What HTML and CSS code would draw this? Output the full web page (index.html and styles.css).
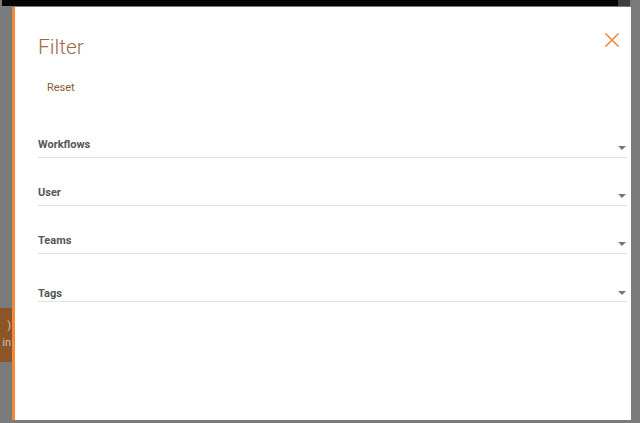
FILE: index.html
```html
<!DOCTYPE html>
<html>
<head>
<meta charset="UTF-8">
<title>Filter</title>
<link rel="stylesheet" href="styles.css">
</head>
<body>
<div class="topbar"><div class="topbar-end"></div></div>
<div class="side-btn"><span>)</span><span>in</span></div>

<div class="modal">
  <div class="modal-head">
    <h2 class="title">Filter</h2>
    <svg class="close" width="16" height="16" viewBox="0 0 16 16"><path d="M1.5 1.5 L14.5 14.5 M14.5 1.5 L1.5 14.5" stroke="#f0883c" stroke-width="1.6" fill="none"/></svg>
  </div>
  <a class="reset" href="#">Reset</a>

  <div class="fields">
    <div class="field"><span>Workflows</span><i class="caret"></i></div>
    <div class="field"><span>User</span><i class="caret"></i></div>
    <div class="field"><span>Teams</span><i class="caret"></i></div>
    <div class="field last"><span>Tags</span><i class="caret"></i></div>
  </div>
</div>
</body>
</html>
```

FILE: styles.css
```css
body { margin: 0; width: 640px; height: 423px; background: #7b7b7b; overflow: hidden; position: relative; font-family: Roboto, "Liberation Sans", sans-serif; }
.topbar { height: 6px; margin: 0 10px 0 2px; background: #050505; display: flex; justify-content: flex-end; }
.topbar-end { width: 12px; background: #3e3e3e; }
.side-btn { position: absolute; left: 0; top: 308px; width: 12px; height: 54px; background: #8c5528; color: #c9c2b8; font-size: 11px; line-height: 17px; padding-top: 9px; box-sizing: border-box; display: flex; flex-direction: column; align-items: flex-end; overflow: hidden; }
.side-btn span { margin-right: 1px; }

.modal { position: absolute; left: 12px; top: 7px; width: 619px; height: 413px; background: #fff; border-left: 3px solid #f5883a; box-sizing: border-box; padding: 0 4px 0 23px; }
.modal-head { display: flex; justify-content: space-between; align-items: flex-start; }
.title { margin: 28px 0 0; font-weight: 300; font-size: 21px; color: #9d6a48; }
.close { margin: 25px 7px 0 0; }
.reset { display: inline-block; margin: 22px 0 0 9px; font-size: 11px; color: #8b5a36; text-decoration: none; }

.fields { margin-top: 15px; display: flex; flex-direction: column; }
.field { display: flex; justify-content: space-between; align-items: flex-end; height: 47px; border-bottom: 1px solid #e2e2e2; font-size: 11px; font-weight: bold; color: #555; }
.field span { margin-bottom: 6px; }
.caret { width: 0; height: 0; border-left: 4px solid transparent; border-right: 4px solid transparent; border-top: 4px solid #767676; margin: 0 1px 7px 0; }
.field.last span { margin-bottom: 1px; }
.field.last .caret { margin-bottom: 6px; }
```
